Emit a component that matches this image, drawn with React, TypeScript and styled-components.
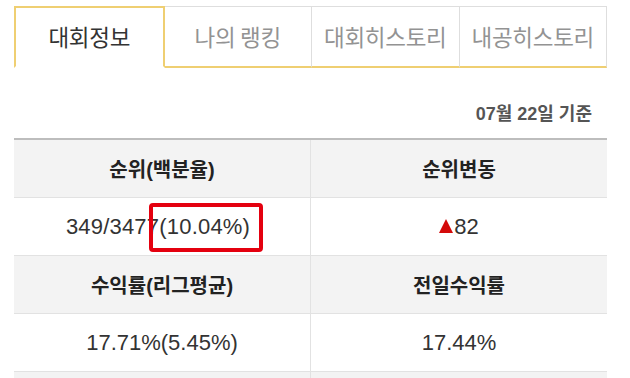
import React from 'react';
import styled, { createGlobalStyle } from 'styled-components';

const GlobalStyle = createGlobalStyle`
  html, body {
    margin: 0;
    padding: 0;
    background: #fff;
  }
  body {
    font-family: 'Liberation Sans', 'Noto Sans CJK KR', sans-serif;
    color: #333;
  }
`;

const YELLOW = '#efcf72';

const Page = styled.div`
  width: 593px;
  padding: 6px 23px 0 14px;
  overflow: hidden;
  height: 372px;
`;

const TabBar = styled.nav`
  display: flex;
  height: 62px;
`;

const Tab = styled.div<{ $active?: boolean }>`
  flex: 1;
  box-sizing: border-box;
  display: flex;
  align-items: center;
  justify-content: center;
  font-family: 'Noto Sans CJK KR', sans-serif;
  font-size: 22.5px;
  letter-spacing: -0.3px;
  cursor: pointer;
  color: ${({ $active }) => ($active ? '#333' : '#939393')};
  border-top: ${({ $active }) => ($active ? `2px solid ${YELLOW}` : '1px solid #dedede')};
  border-left: ${({ $active }) => ($active ? `2px solid ${YELLOW}` : 'none')};
  border-right: ${({ $active }) => ($active ? `2px solid ${YELLOW}` : '1px solid #dedede')};
  border-bottom: 2px solid ${({ $active }) => ($active ? '#fff' : YELLOW)};
  padding-bottom: 2px;
`;

const DateLine = styled.div`
  padding: 36px 15px 14px 0;
  line-height: 20px;
  text-align: right;
  font-size: 18px;
  font-weight: bold;
  color: #555;
`;

const Table = styled.div`
  display: grid;
  grid-template-columns: 297px 1fr;
  border-top: 2px solid #bdbdbd;
`;

const Cell = styled.div<{ $head?: boolean; $left?: boolean }>`
  position: relative;
  box-sizing: border-box;
  height: 58px;
  display: flex;
  align-items: center;
  justify-content: center;
  background: ${({ $head }) => ($head ? '#f3f3f3' : '#fff')};
  border-bottom: 1px solid #e2e2e2;
  border-right: ${({ $left }) => ($left ? '1px solid #e2e2e2' : 'none')};
  font-size: ${({ $head }) => ($head ? '20px' : '22px')};
  font-weight: ${({ $head }) => ($head ? 'bold' : 'normal')};
  color: ${({ $head }) => ($head ? '#222' : '#333')};
`;

const RankCell = styled(Cell)`
  padding-right: 8px;
  letter-spacing: 0.2px;
`;

const Highlight = styled.span`
  position: absolute;
  left: 135px;
  top: 5px;
  width: 114px;
  height: 49px;
  box-sizing: border-box;
  border: 4px solid #e4000f;
  border-radius: 4px;
`;

const Up = styled.svg`
  width: 14px;
  height: 14px;
  margin-right: 1px;
  margin-top: -1px;
`;

const tabs = ['대회정보', '나의 랭킹', '대회히스토리', '내공히스토리'];

export default function App() {
  return (
    <>
      <GlobalStyle />
      <Page>
        <TabBar>
          {tabs.map((t, i) => (
            <Tab key={t} $active={i === 0}>
              {t}
            </Tab>
          ))}
        </TabBar>
        <DateLine>07월 22일 기준</DateLine>
        <Table>
          <Cell $head $left>순위(백분율)</Cell>
          <Cell $head>순위변동</Cell>
          <RankCell $left>
            349/3477(10.04%)
            <Highlight />
          </RankCell>
          <Cell>
            <Up viewBox="0 0 14 14">
              <polygon points="7,0 14,14 0,14" fill="#d40a0a" />
            </Up>
            82
          </Cell>
          <Cell $head $left>수익률(리그평균)</Cell>
          <Cell $head>전일수익률</Cell>
          <Cell $left>17.71%(5.45%)</Cell>
          <Cell>17.44%</Cell>
          <Cell $head $left />
          <Cell $head />
        </Table>
      </Page>
    </>
  );
}
